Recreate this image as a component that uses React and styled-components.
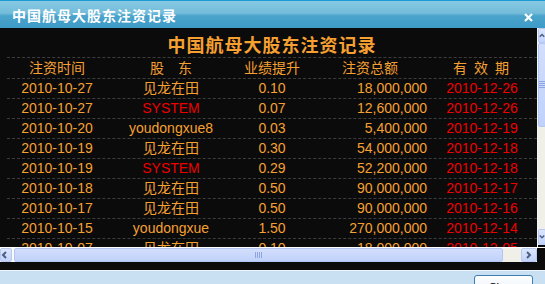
import React from 'react';
import styled, { createGlobalStyle } from 'styled-components';

const GlobalStyle = createGlobalStyle`
  html, body {
    margin: 0;
    padding: 0;
    background: #0b0b0b;
  }
`;

const ORANGE = '#f6a032';
const RED = '#ee0000';

const Window = styled.div`
  width: 545px;
  height: 284px;
  display: flex;
  flex-direction: column;
  overflow: hidden;
  font-family: "Liberation Sans", "Noto Sans CJK SC", sans-serif;
`;

const TitleBar = styled.div`
  height: 27px;
  flex-shrink: 0;
  display: flex;
  align-items: center;
  justify-content: space-between;
  padding: 0 12px 0 12px;
  border-top: 1px solid #1d9ad6;
  background: linear-gradient(to bottom, #86c9e2 0%, #74bcda 45%, #4aa3cb 55%, #3d9bc6 100%);
`;

const TitleText = styled.span`
  color: #fff;
  font-family: "Noto Sans CJK SC", sans-serif;
  font-size: 14px;
  font-weight: bold;
  letter-spacing: 1px;
  line-height: 16px;
`;

const CloseIcon = styled.svg`
  width: 9px;
  height: 9px;
  margin-top: 6px;
`;

const ScrollArea = styled.div`
  height: 219px;
  flex-shrink: 0;
  display: flex;
  background: #0b0b0b;
`;

const Content = styled.div`
  width: 537px;
  flex-shrink: 0;
  overflow: hidden;
  padding-left: 7px;
  box-sizing: border-box;
`;

const Table = styled.div`
  width: 530px;
`;

const Caption = styled.div`
  height: 26px;
  padding-top: 3px;
  line-height: 26px;
  text-align: center;
  color: ${ORANGE};
  font-family: "Noto Sans CJK SC", sans-serif;
  font-size: 18px;
  font-weight: bold;
  letter-spacing: 1px;
  border-bottom: 1px dashed #3d3d3d;
`;

const Row = styled.div`
  display: grid;
  grid-template-columns: 100px 128px 74px 122px 106px;
  height: ${(p) => (p.$head ? 20 : 19)}px;
  line-height: ${(p) => (p.$head ? 20 : 19)}px;
  border-bottom: 1px dashed #3d3d3d;
  font-size: 14px;
  color: ${ORANGE};
  white-space: nowrap;
`;

const Cell = styled.div`
  text-align: ${(p) => p.$align || 'center'};
  padding-right: ${(p) => p.$pr || 0}px;
  color: ${(p) => (p.$red ? RED : 'inherit')};
`;

const VScroll = styled.div`
  width: 8px;
  flex-shrink: 0;
  display: flex;
  flex-direction: column;
  border-left: 1px solid #f4f6fb;
  background: #eef0f6;
`;

const ScrollBtn = styled.div`
  flex-shrink: 0;
  width: ${(p) => p.$w || 'auto'};
  height: ${(p) => p.$h || 'auto'};
  display: flex;
  align-items: center;
  justify-content: ${(p) => p.$justify || 'center'};
  box-sizing: border-box;
  border: 1px solid #b7c9f2;
  border-radius: 2px;
  background: linear-gradient(to bottom, #dce6fd, #c3d3fa);
`;

const Thumb = styled.div`
  flex: ${(p) => p.$flex || 'none'};
  height: ${(p) => p.$h || 'auto'};
  margin: ${(p) => p.$m || 0};
  display: flex;
  align-items: center;
  justify-content: center;
  box-sizing: border-box;
  border: 1px solid #b3c6f3;
  border-radius: 2px;
  background: linear-gradient(to bottom, #d3defc, #c0d1fa);
`;

const Track = styled.div`
  flex: ${(p) => p.$flex || 'none'};
  width: ${(p) => p.$w || 'auto'};
  background: #f1f0e8;
`;

const HScroll = styled.div`
  height: 15px;
  flex-shrink: 0;
  display: flex;
  background: #fbfbf8;
  border-top: 1px solid #fff;
  box-sizing: border-box;
`;

const Corner = styled.div`
  width: 8px;
  flex-shrink: 0;
  background: #0b0b0b;
`;

const Gap = styled.div`
  height: 8px;
  flex-shrink: 0;
  background: #0b0b0b;
`;

const Footer = styled.div`
  flex: 1;
  display: flex;
  justify-content: flex-end;
  padding: 4px 12px 0 0;
  border-top: 1px solid #eef6fc;
  background: #c8e0f2;
`;

const Button = styled.button`
  width: 59px;
  height: 22px;
  padding: 3px 0 0;
  align-self: flex-start;
  border: 1px solid #3b7eb3;
  border-radius: 3px;
  background: linear-gradient(to bottom, #ffffff, #e3edf7);
  font-family: "DejaVu Sans", sans-serif;
  font-size: 11px;
  line-height: 14px;
  color: #000;
  text-align: center;
  vertical-align: top;
`;

const Grip = ({ vertical }) => (
  <svg width={vertical ? 6 : 8} height={vertical ? 8 : 6} viewBox={vertical ? '0 0 6 8' : '0 0 8 6'}>
    {[0, 2, 4, 6].map((i) =>
      vertical ? (
        <rect key={i} x="0" y={i} width="6" height="1" fill="#8ea6e0" />
      ) : (
        <rect key={i} x={i} y="0" width="1" height="6" fill="#8ea6e0" />
      )
    )}
  </svg>
);

const Arrow = ({ dir }) => {
  const pts = {
    left: '5,1 2,4 5,7',
    right: '2,1 5,4 2,7',
    up: '1,5 4,2 7,5',
    down: '1,2 4,5 7,2',
  }[dir];
  return (
    <svg width="8" height="8" viewBox="0 0 8 8">
      <polyline points={pts} fill="none" stroke="#4d6185" strokeWidth="2" />
    </svg>
  );
};

const rows = [
  ['2010-10-27', '见龙在田', '0.10', '18,000,000', '2010-12-26'],
  ['2010-10-27', 'SYSTEM', '0.07', '12,600,000', '2010-12-26'],
  ['2010-10-20', 'youdongxue8', '0.03', '5,400,000', '2010-12-19'],
  ['2010-10-19', '见龙在田', '0.30', '54,000,000', '2010-12-18'],
  ['2010-10-19', 'SYSTEM', '0.29', '52,200,000', '2010-12-18'],
  ['2010-10-18', '见龙在田', '0.50', '90,000,000', '2010-12-17'],
  ['2010-10-17', '见龙在田', '0.50', '90,000,000', '2010-12-16'],
  ['2010-10-15', 'youdongxue', '1.50', '270,000,000', '2010-12-14'],
  ['2010-10-07', '见龙在田', '0.10', '18,000,000', '2010-12-05'],
];

const App = () => {
  return (
    <Window>
      <GlobalStyle />
      <TitleBar>
        <TitleText>中国航母大股东注资记录</TitleText>
        <CloseIcon viewBox="0 0 9 9">
          <path d="M1 1 L8 8 M8 1 L1 8" stroke="#fff" strokeWidth="2.2" />
        </CloseIcon>
      </TitleBar>

      <ScrollArea>
        <Content>
          <Table>
            <Caption>中国航母大股东注资记录</Caption>
            <Row $head>
              <Cell>注资时间</Cell>
              <Cell>股　东</Cell>
              <Cell>业绩提升</Cell>
              <Cell>注资总额</Cell>
              <Cell $pr={6}>有{'\u2002'}效{'\u2002'}期</Cell>
            </Row>
            {rows.map((r, i) => (
              <Row key={i}>
                <Cell>{r[0]}</Cell>
                <Cell $red={r[1] === 'SYSTEM'}>{r[1]}</Cell>
                <Cell>{r[2]}</Cell>
                <Cell $align="right" $pr={4}>{r[3]}</Cell>
                <Cell $red $pr={4}>{r[4]}</Cell>
              </Row>
            ))}
          </Table>
        </Content>
        <VScroll>
          <ScrollBtn $h="15px" $justify="flex-start">
            <Arrow dir="up" />
          </ScrollBtn>
          <Thumb $h="84px">
            <Grip vertical />
          </Thumb>
          <Track $flex="1" />
          <ScrollBtn $h="16px" $justify="flex-start">
            <Arrow dir="down" />
          </ScrollBtn>
          <Track $w="7px" style={{ height: 2, background: '#0b0b0b' }} />
        </VScroll>
      </ScrollArea>

      <HScroll>
        <ScrollBtn $w="12px" $justify="flex-start">
          <Arrow dir="left" />
        </ScrollBtn>
        <Thumb $flex="1" $m="0 0 0 2px">
          <Grip />
        </Thumb>
        <Track $w="18px" />
        <ScrollBtn $w="16px">
          <Arrow dir="right" />
        </ScrollBtn>
        <Corner />
      </HScroll>
      <Gap />
      <Footer>
        <Button>Close</Button>
      </Footer>
    </Window>
  );
};

export default App;
